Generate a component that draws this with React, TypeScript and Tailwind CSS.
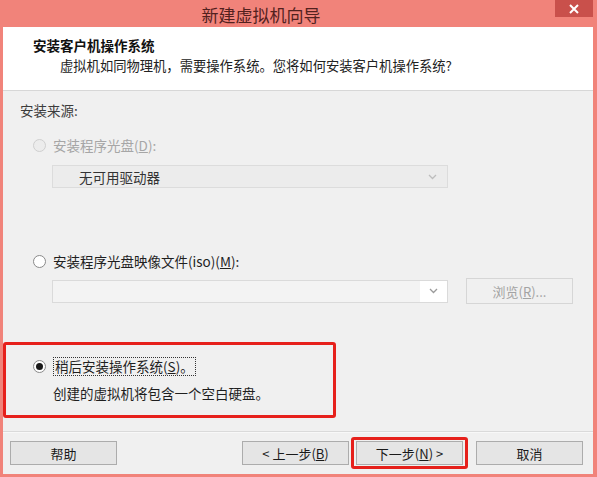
import React from "react";

const font = { fontFamily: '"Noto Sans CJK SC", "Noto Sans", sans-serif' };

const Radio = ({ checked, disabled }: { checked?: boolean; disabled?: boolean }) => (
  <span
    className={
      "flex items-center justify-center w-[13px] h-[13px] rounded-full border " +
      (disabled ? "border-[#cfcfcf] bg-[#ececec]" : "border-[#8a8a8a] bg-white")
    }
  >
    {checked && <span className="w-[7px] h-[7px] rounded-full bg-[#1a1a1a]" />}
  </span>
);

const Chevron = ({ color }: { color: string }) => (
  <svg width="9" height="6" viewBox="0 0 9 6" fill="none">
    <path d="M1 1l3.5 3.5L8 1" stroke={color} strokeWidth="1.3" />
  </svg>
);

const Button = ({ children, disabled }: { children: React.ReactNode; disabled?: boolean }) => (
  <div
    className={
      "w-[107px] h-[24px] flex items-center justify-center border text-[13px] leading-none " +
      (disabled
        ? "border-[#d6d6d6] bg-[#f0f0f0] text-[#a3a3a3] h-[26px]"
        : "border-[#acacac] bg-[#e5e5e5] text-[#1a1a1a]")
    }
  >
    {children}
  </div>
);

export default function App() {
  return (
    <div className="w-[597px] h-[477px] bg-[#f1837a] flex flex-col" style={font}>
      {/* title bar */}
      <div className="relative h-[27px] flex items-center justify-center pr-[75px]">
        <span className="text-[17px] text-[#52211e] leading-none pt-[2px]">新建虚拟机向导</span>
        <div className="absolute top-0 right-[4px] w-[38px] h-[17px] bg-[#c9504b] flex items-center justify-center">
          <svg width="10" height="10" viewBox="0 0 10 10">
            <path d="M1 1l8 8M9 1l-8 8" stroke="#fff" strokeWidth="2" />
          </svg>
        </div>
      </div>

      <div className="ml-[3px] mr-[4px] mb-[3px] flex-1 flex flex-col">
        {/* header */}
        <div className="h-[64px] bg-white border-b border-[#d7d7d7] pt-[9px]">
          <div className="pl-[30px] text-[13.5px] font-bold leading-[18px] text-[#111]">安装客户机操作系统</div>
          <div className="pl-[57px] mt-[3px] text-[13.3px] leading-[18px] text-[#222]">
            虚拟机如同物理机，需要操作系统。您将如何安装客户机操作系统?
          </div>
        </div>

        {/* body */}
        <div className="flex-1 bg-[#f0f0f0] border-b border-[#dadada] text-[13.5px] leading-[18px]">
          <div className="pl-[17px] pt-[10px] text-[#3c3c3c]">安装来源:</div>

          <div className="flex items-center gap-[7px] pl-[30px] mt-[17px] text-[#a6a6a6]">
            <Radio disabled />
            <span>
              安装程序光盘(<span className="underline">D</span>):
            </span>
          </div>

          <div className="ml-[49px] mt-[11px] w-[396px] h-[23px] border border-[#dcdcdc] bg-[#ececec] flex items-center justify-between pl-[26px] pr-[10px]">
            <span className="text-[#333]">无可用驱动器</span>
            <Chevron color="#bdbdbd" />
          </div>

          <div className="flex items-center gap-[7px] pl-[30px] mt-[64px] text-[#1f1f1f]">
            <Radio />
            <span>
              安装程序光盘映像文件(iso)(<span className="underline">M</span>):
            </span>
          </div>

          <div className="flex items-center mt-[8px]">
            <div className="ml-[49px] w-[396px] h-[23px] border border-[#dadada] bg-[#f3f3f3] flex items-center justify-end">
              <div className="w-[27px] h-full bg-white flex items-center justify-center">
                <Chevron color="#9a9a9a" />
              </div>
            </div>
            <div className="ml-[18px]">
              <Button disabled>
                浏览(<span className="underline">R</span>)...
              </Button>
            </div>
          </div>

          <div className="mt-[38px] w-[333px] h-[76px] border-[3px] border-[#e6201b] rounded-[3px] pt-[12px]">
            <div className="flex items-center gap-[7px] pl-[27px] text-[#1f1f1f]">
              <Radio checked />
              <span className="border border-dotted border-[#333] px-[1px] leading-[17px]">
                稍后安装操作系统(<span className="underline">S</span>)。
              </span>
            </div>
            <div className="pl-[47px] mt-[8px] text-[#1f1f1f]">创建的虚拟机将包含一个空白硬盘。</div>
          </div>
        </div>

        {/* footer */}
        <div className="h-[42px] bg-[#f0f0f0] border-t border-[#f8f8f8] flex items-start pt-[8px]">
          <div className="ml-[7px]">
            <Button>帮助</Button>
          </div>
          <div className="ml-[125px]">
            <Button>
              &lt; 上一步(<span className="underline">B</span>)
            </Button>
          </div>
          <div className="ml-[2px] -mt-[4px] border-[3px] border-[#e6201b] rounded-[3px] px-[2px] py-[1px]">
            <Button>
              下一步(<span className="underline">N</span>) &gt;
            </Button>
          </div>
          <div className="ml-[8px]">
            <Button>取消</Button>
          </div>
        </div>
      </div>
    </div>
  );
}
